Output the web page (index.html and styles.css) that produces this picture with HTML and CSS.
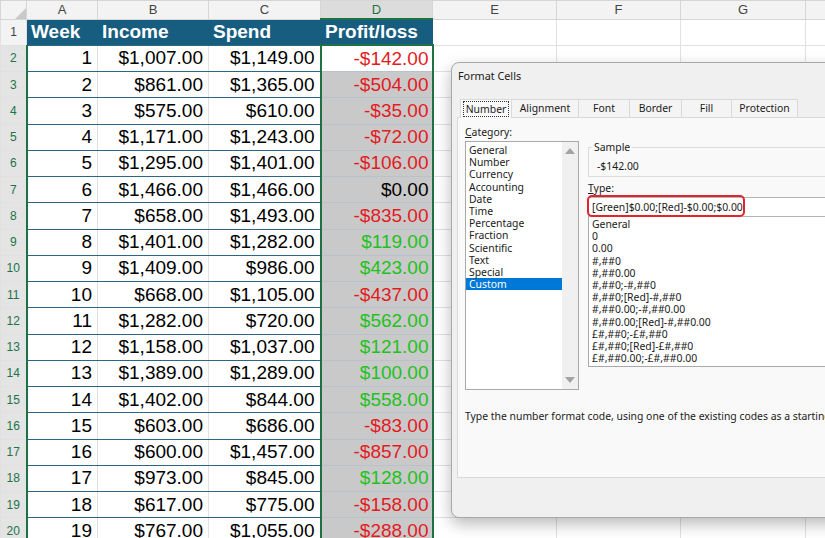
FILE: index.html
```html
<!DOCTYPE html>
<html lang="en">
  <head>
    <meta charset="UTF-8" />
    <meta name="viewport" content="width=device-width, initial-scale=1.0" />
    <title>Profit and loss</title>
    <link rel="stylesheet" href="styles.css">
  </head>
  <body>
    <table class="grid">
      <colgroup>
        <col class="c-rh" /><col class="c-a" /><col class="c-b" /><col class="c-c" /><col class="c-d" />
        <col class="c-e" /><col class="c-f" /><col class="c-g" /><col class="c-h" />
      </colgroup>
      <thead>
        <tr class="colheads">
          <th class="corner">
            <svg width="12" height="12" viewBox="0 0 12 12"><path d="M12 1 L12 12 L1 12 Z" fill="#c9c9c9" /></svg>
          </th>
          <th>A</th><th>B</th><th>C</th><th class="sel-col">D</th><th>E</th><th>F</th><th>G</th><th></th>
        </tr>
      </thead>
      <tbody>
        <tr class="title-row">
          <th class="rh">1</th>
          <td class="hd">Week</td><td class="hd">Income</td><td class="hd">Spend</td><td class="hd">Profit/loss</td>
          <td></td><td></td><td></td><td></td>
        </tr>
        <tr><th class="rh on">2</th><td>1</td><td>$1,007.00</td><td>$1,149.00</td><td class="pl active neg">-$142.00</td><td></td><td></td><td></td><td></td></tr>
        <tr><th class="rh on">3</th><td>2</td><td>$861.00</td><td>$1,365.00</td><td class="pl neg">-$504.00</td><td></td><td></td><td></td><td></td></tr>
        <tr><th class="rh on">4</th><td>3</td><td>$575.00</td><td>$610.00</td><td class="pl neg">-$35.00</td><td></td><td></td><td></td><td></td></tr>
        <tr><th class="rh on">5</th><td>4</td><td>$1,171.00</td><td>$1,243.00</td><td class="pl neg">-$72.00</td><td></td><td></td><td></td><td></td></tr>
        <tr><th class="rh on">6</th><td>5</td><td>$1,295.00</td><td>$1,401.00</td><td class="pl neg">-$106.00</td><td></td><td></td><td></td><td></td></tr>
        <tr><th class="rh on">7</th><td>6</td><td>$1,466.00</td><td>$1,466.00</td><td class="pl">$0.00</td><td></td><td></td><td></td><td></td></tr>
        <tr><th class="rh on">8</th><td>7</td><td>$658.00</td><td>$1,493.00</td><td class="pl neg">-$835.00</td><td></td><td></td><td></td><td></td></tr>
        <tr><th class="rh on">9</th><td>8</td><td>$1,401.00</td><td>$1,282.00</td><td class="pl pos">$119.00</td><td></td><td></td><td></td><td></td></tr>
        <tr><th class="rh on">10</th><td>9</td><td>$1,409.00</td><td>$986.00</td><td class="pl pos">$423.00</td><td></td><td></td><td></td><td></td></tr>
        <tr><th class="rh on">11</th><td>10</td><td>$668.00</td><td>$1,105.00</td><td class="pl neg">-$437.00</td><td></td><td></td><td></td><td></td></tr>
        <tr><th class="rh on">12</th><td>11</td><td>$1,282.00</td><td>$720.00</td><td class="pl pos">$562.00</td><td></td><td></td><td></td><td></td></tr>
        <tr><th class="rh on">13</th><td>12</td><td>$1,158.00</td><td>$1,037.00</td><td class="pl pos">$121.00</td><td></td><td></td><td></td><td></td></tr>
        <tr><th class="rh on">14</th><td>13</td><td>$1,389.00</td><td>$1,289.00</td><td class="pl pos">$100.00</td><td></td><td></td><td></td><td></td></tr>
        <tr><th class="rh on">15</th><td>14</td><td>$1,402.00</td><td>$844.00</td><td class="pl pos">$558.00</td><td></td><td></td><td></td><td></td></tr>
        <tr><th class="rh on">16</th><td>15</td><td>$603.00</td><td>$686.00</td><td class="pl neg">-$83.00</td><td></td><td></td><td></td><td></td></tr>
        <tr><th class="rh on">17</th><td>16</td><td>$600.00</td><td>$1,457.00</td><td class="pl neg">-$857.00</td><td></td><td></td><td></td><td></td></tr>
        <tr><th class="rh on">18</th><td>17</td><td>$973.00</td><td>$845.00</td><td class="pl pos">$128.00</td><td></td><td></td><td></td><td></td></tr>
        <tr><th class="rh on">19</th><td>18</td><td>$617.00</td><td>$775.00</td><td class="pl neg">-$158.00</td><td></td><td></td><td></td><td></td></tr>
        <tr><th class="rh on">20</th><td>19</td><td>$767.00</td><td>$1,055.00</td><td class="pl neg">-$288.00</td><td></td><td></td><td></td><td></td></tr>
      </tbody>
    </table>

    <div class="dialog">
      <div class="dlg-title">Format Cells</div>
      <div class="tabs">
        <div class="tab active"><span class="focus">Number</span></div>
        <div class="tab t-align">Alignment</div>
        <div class="tab t-font">Font</div>
        <div class="tab t-border">Border</div>
        <div class="tab t-fill">Fill</div>
        <div class="tab t-prot">Protection</div>
      </div>
      <div class="panel">
        <div class="panel-body">
          <div class="cat-col">
            <div class="label"><u>C</u>ategory:</div>
            <div class="cat-list">
              <ul class="items">
                <li>General</li>
                <li>Number</li>
                <li>Currency</li>
                <li>Accounting</li>
                <li>Date</li>
                <li>Time</li>
                <li>Percentage</li>
                <li>Fraction</li>
                <li>Scientific</li>
                <li>Text</li>
                <li>Special</li>
                <li class="picked">Custom</li>
              </ul>
              <div class="scrollbar">
                <svg width="10" height="6" viewBox="0 0 10 6"><path d="M0 6 L5 0 L10 6 Z" fill="#a3a3a3" /></svg>
                <svg width="10" height="6" viewBox="0 0 10 6"><path d="M0 0 L10 0 L5 6 Z" fill="#a3a3a3" /></svg>
              </div>
            </div>
          </div>
          <div class="type-col">
            <fieldset class="sample">
              <legend>Sample</legend>
              <div class="sample-val">-$142.00</div>
            </fieldset>
            <div class="label type-label"><u>T</u>ype:</div>
            <div class="type-field">
              <div class="type-input">[Green]$0.00;[Red]-$0.00;$0.00</div>
              <span class="annot"></span>
            </div>
            <ul class="type-list">
              <li>General</li>
              <li>0</li>
              <li>0.00</li>
              <li>#,##0</li>
              <li>#,##0.00</li>
              <li>#,##0;-#,##0</li>
              <li>#,##0;[Red]-#,##0</li>
              <li>#,##0.00;-#,##0.00</li>
              <li>#,##0.00;[Red]-#,##0.00</li>
              <li>£#,##0;-£#,##0</li>
              <li>£#,##0;[Red]-£#,##0</li>
              <li>£#,##0.00;-£#,##0.00</li>
            </ul>
          </div>
        </div>
        <p class="hint">Type the number format code, using one of the existing codes as a starting point.</p>
      </div>
    </div>
  </body>
</html>
```

FILE: styles.css
```css
html,
body {
  margin: 0;
  width: 825px;
  height: 538px;
  overflow: hidden;
  background: #ffffff;
}

/* spreadsheet */
.grid {
  border-collapse: collapse;
  table-layout: fixed;
  width: 845px;
  font-family: "Liberation Sans", Arial, sans-serif;
}
.c-rh { width: 26px; }
.c-a { width: 71px; }
.c-b { width: 111px; }
.c-c { width: 112px; }
.c-d { width: 112px; }
.c-e { width: 124px; }
.c-f { width: 124px; }
.c-g { width: 125px; }
.c-h { width: 40px; }

.grid th,
.grid td {
  padding: 0;
  border: 1px solid #e1e1e1;
  white-space: nowrap;
  overflow: hidden;
}
.colheads th {
  height: 17px;
  background: #f3f3f3;
  border-color: #d6d6d6;
  font-weight: normal;
  font-size: 13px;
  color: #444444;
  text-align: center;
}
.colheads .corner {
  text-align: right;
  vertical-align: bottom;
  line-height: 0;
}
.colheads .sel-col {
  background: #dcdcdc;
  color: #1e7145;
  border-bottom: 2px solid #1e7145;
}

.grid tbody tr {
  height: 26.25px;
}
.rh {
  background: #f3f3f3;
  border-color: #d6d6d6;
  font-weight: normal;
  font-size: 12px;
  color: #444444;
  text-align: center;
}
.rh.on {
  background: #e4e4e4;
  color: #217346;
  border-right: 2px solid #1e7145;
}

.grid tbody td {
  font-size: 19px;
  color: #000000;
  text-align: right;
  padding-right: 5px;
}
.grid tbody td:nth-child(2),
.grid tbody td:nth-child(3),
.grid tbody td:nth-child(4) {
  border-bottom-color: #2c6586;
}
.title-row .hd {
  background: #175d80;
  border-color: #175d80;
  color: #ffffff;
  font-weight: bold;
  text-align: left;
  padding-left: 4px;
  padding-right: 0;
}

.pl {
  background: #c9c9c9;
  border-left: 2px solid #1e7145 !important;
  border-right: 2px solid #1e7145 !important;
  border-bottom-color: #b9c2c8 !important;
  padding-right: 3px !important;
}
.pl.active {
  background: #ffffff;
  border-top: 2px solid #1e7145;
}
.neg {
  color: #e31b1f !important;
}
.pos {
  color: #1ec21e !important;
}

/* dialog */
.dialog {
  position: absolute;
  left: 451px;
  top: 62px;
  width: 420px;
  height: 454px;
  background: #f0f0f0;
  border: 1px solid #a8a8a8;
  border-radius: 8px 0 0 8px;
  box-shadow: 0 6px 16px rgba(0, 0, 0, 0.28);
  font-family: "Noto Sans", "Open Sans", sans-serif;
  font-size: 10.4px;
  color: #1a1a1a;
}
.dlg-title {
  height: 36px;
  box-sizing: border-box;
  padding: 6px 0 0 6px;
  line-height: 14px;
  font-size: 10.8px;
}
.tabs {
  display: flex;
  height: 18px;
  margin-left: 8px;
}
.tab {
  box-sizing: border-box;
  height: 18px;
  border: 1px solid #dadada;
  border-bottom: none;
  border-left: none;
  background: #f4f4f4;
  text-align: center;
  line-height: 17px;
}
.tab.active {
  width: 52px;
  background: #f9f9f9;
  border-left: 1px solid #dadada;
  height: 19px;
  position: relative;
  z-index: 1;
  padding-top: 1px;
}
.focus {
  display: inline-block;
  padding: 0 2px;
  line-height: 14px;
  outline: 1px dotted #333333;
}
.t-align { width: 67px; }
.t-font { width: 51px; }
.t-border { width: 52px; }
.t-fill { width: 50px; }
.t-prot { width: 66px; }

.panel {
  margin-left: 5px;
  height: 361px;
  box-sizing: border-box;
  background: #f9f9f9;
  border: 1px solid #d9d9d9;
  padding-left: 7px;
}
.panel-body {
  display: flex;
  gap: 9px;
  padding-top: 7px;
}
.label {
  line-height: 14px;
}
.cat-col {
  width: 114px;
}
.cat-list {
  display: flex;
  margin-top: 2px;
  height: 249px;
  box-sizing: border-box;
  border: 1px solid #a9a9a9;
  background: #ffffff;
}
.items,
.type-list {
  list-style: none;
  margin: 0;
  padding: 2px 0 0 0;
}
.items {
  flex: 1;
}
.items li,
.type-list li {
  height: 12.2px;
  line-height: 12.2px;
  padding-left: 3px;
}
.items li.picked {
  background: #0078d7;
  color: #ffffff;
}
.scrollbar {
  width: 16px;
  background: #f0f0f0;
  display: flex;
  flex-direction: column;
  justify-content: space-between;
  align-items: center;
  padding: 6px 0 6px 0;
}

.type-col {
  flex: 1;
}
.sample {
  margin: 15px 0 0 0;
  padding: 5px 8px 3px 8px;
  border: 1px solid #dcdcdc;
}
.sample legend {
  padding: 0 2px;
  margin-left: -5px;
  line-height: 14px;
}
.sample-val {
  line-height: 14px;
}
.type-label {
  margin-top: 4px;
}
.type-field {
  position: relative;
  margin-top: 2px;
}
.type-input {
  height: 20px;
  box-sizing: border-box;
  border: 1px solid #b5b5b5;
  background: #ffffff;
  padding-left: 3px;
  line-height: 18px;
}
.annot {
  position: absolute;
  left: -1px;
  top: -2px;
  width: 158px;
  height: 22px;
  box-sizing: border-box;
  border: 2px solid #e3232d;
  border-radius: 5px;
}
.type-list {
  margin-top: -1px;
  height: 151px;
  box-sizing: border-box;
  border: 1px solid #a9a9a9;
  background: #ffffff;
  padding-top: 1px;
}
.hint {
  margin: 19px 0 0 0;
  line-height: 14px;
  white-space: nowrap;
}
```
